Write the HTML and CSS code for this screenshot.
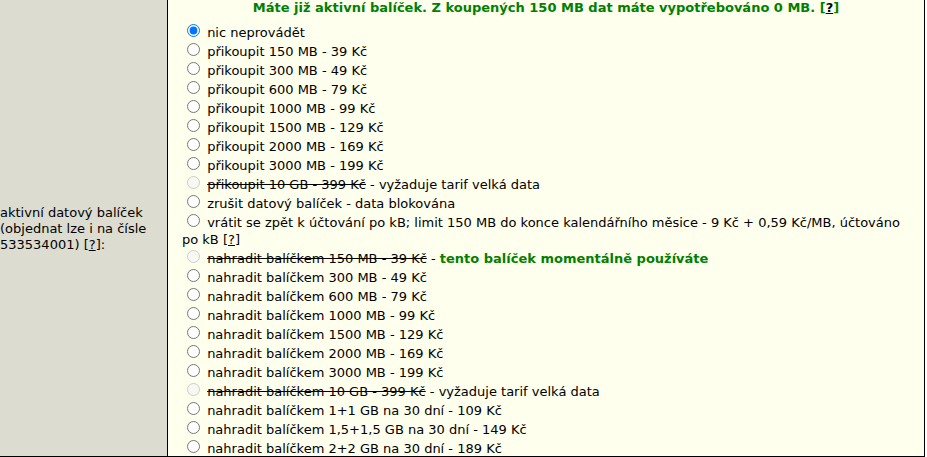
FILE: index.html
```html
<!DOCTYPE html>
<html lang="cs">
<head>
<meta charset="utf-8">
<title>Datový balíček</title>
<link rel="stylesheet" href="styles.css">
</head>
<body>
<div class="table">
  <div class="label-cell">
    <div class="label">aktivní datový balíček<br>(objednat lze i na čísle<br>533534001) [<a href="#" class="help">?</a>]:</div>
  </div>
  <div class="value-cell">
    <div class="notice">Máte již aktivní balíček. Z koupených 150 MB dat máte vypotřebováno 0 MB. [<a href="#" class="help">?</a>]</div>
    <div class="options">
      <label class="opt"><input type="radio" name="bal" checked> nic neprovádět</label>
      <label class="opt"><input type="radio" name="bal"> přikoupit 150 MB - 39 Kč</label>
      <label class="opt"><input type="radio" name="bal"> přikoupit 300 MB - 49 Kč</label>
      <label class="opt"><input type="radio" name="bal"> přikoupit 600 MB - 79 Kč</label>
      <label class="opt"><input type="radio" name="bal"> přikoupit 1000 MB - 99 Kč</label>
      <label class="opt"><input type="radio" name="bal"> přikoupit 1500 MB - 129 Kč</label>
      <label class="opt"><input type="radio" name="bal"> přikoupit 2000 MB - 169 Kč</label>
      <label class="opt"><input type="radio" name="bal"> přikoupit 3000 MB - 199 Kč</label>
      <label class="opt"><input type="radio" name="bal" disabled> <s>přikoupit 10 GB - 399 Kč</s> - vyžaduje tarif velká data</label>
      <label class="opt"><input type="radio" name="bal"> zrušit datový balíček - data blokována</label>
      <label class="opt"><input type="radio" name="bal"> vrátit se zpět k účtování po kB; limit 150 MB do konce kalendářního měsice - 9 Kč + 0,59 Kč/MB, účtováno po kB <span class="ref">[<a href="#" class="help">?</a>]</span></label>
      <label class="opt"><input type="radio" name="bal" disabled> <s>nahradit balíčkem 150 MB - 39 Kč</s> - <strong class="current">tento balíček momentálně používáte</strong></label>
      <label class="opt"><input type="radio" name="bal"> nahradit balíčkem 300 MB - 49 Kč</label>
      <label class="opt"><input type="radio" name="bal"> nahradit balíčkem 600 MB - 79 Kč</label>
      <label class="opt"><input type="radio" name="bal"> nahradit balíčkem 1000 MB - 99 Kč</label>
      <label class="opt"><input type="radio" name="bal"> nahradit balíčkem 1500 MB - 129 Kč</label>
      <label class="opt"><input type="radio" name="bal"> nahradit balíčkem 2000 MB - 169 Kč</label>
      <label class="opt"><input type="radio" name="bal"> nahradit balíčkem 3000 MB - 199 Kč</label>
      <label class="opt"><input type="radio" name="bal" disabled> <s>nahradit balíčkem 10 GB - 399 Kč</s> - vyžaduje tarif velká data</label>
      <label class="opt"><input type="radio" name="bal"> nahradit balíčkem 1+1 GB na 30 dní - 109 Kč</label>
      <label class="opt"><input type="radio" name="bal"> nahradit balíčkem 1,5+1,5 GB na 30 dní - 149 Kč</label>
      <label class="opt"><input type="radio" name="bal"> nahradit balíčkem 2+2 GB na 30 dní - 189 Kč</label>
    </div>
  </div>
</div>
</body>
</html>
```
FILE: styles.css
```css
html, body {
  margin: 0;
  padding: 0;
  background: #ffffff;
}
body {
  font-family: "DejaVu Sans", Verdana, sans-serif;
  font-size: 13px;
  color: #000000;
  overflow: hidden;
}
.table {
  display: grid;
  grid-template-columns: 168px 1fr;
  width: 924px;
  height: 456px;
  border-right: 1px solid #000;
  border-bottom: 1px solid #000;
  overflow: hidden;
}
.label-cell {
  background: #dcdcd0;
  border-right: 1px solid #000;
  display: flex;
  align-items: center;
}
.label {
  line-height: 16px;
  white-space: nowrap;
  margin-top: 2px;
}
.value-cell {
  background: #ffffee;
  padding: 0 14px 0 14px;
  overflow: hidden;
}
.notice {
  text-align: center;
  font-weight: bold;
  color: #008000;
  line-height: 15px;
  margin-bottom: 6.5px;
}
.help {
  color: #000;
  text-decoration: underline;
}
.ref {
  white-space: nowrap;
}
.options {
  line-height: 17px;
}
.opt {
  display: block;
}
.opt input {
  margin: 2px 3px 0 5px;
  width: 13px;
  height: 13px;
  vertical-align: baseline;
}
.current {
  color: #008000;
}
```
